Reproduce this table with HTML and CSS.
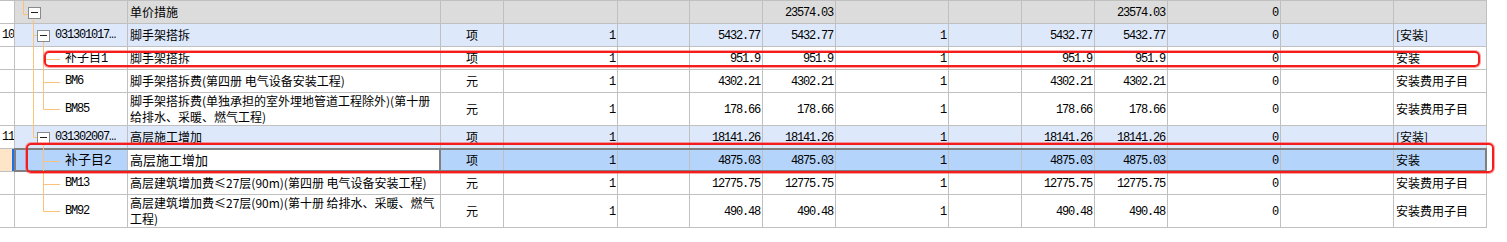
FILE: index.html
```html
<!DOCTYPE html>
<html lang="zh-CN">
<head>
<meta charset="utf-8">
<title>单价措施</title>
<link rel="stylesheet" href="styles.css">
</head>
<body>
<div class="sheet">
  <div class="row grp">
    <div class="cell rn"></div>
    <div class="cell code lv0"><span class="toggle"></span></div>
    <div class="cell name">单价措施</div>
    <div class="cell unit"></div>
    <div class="cell n"></div>
    <div class="cell n"></div>
    <div class="cell n"></div>
    <div class="cell n">23574.03</div>
    <div class="cell n"></div>
    <div class="cell n"></div>
    <div class="cell n"></div>
    <div class="cell n">23574.03</div>
    <div class="cell n">0</div>
    <div class="cell n"></div>
    <div class="cell tag"></div>
  </div>

  <div class="row item">
    <div class="cell rn">10</div>
    <div class="cell code lv1"><span class="toggle"></span><span class="ctext">031301017…</span></div>
    <div class="cell name">脚手架搭拆</div>
    <div class="cell unit">项</div>
    <div class="cell n">1</div>
    <div class="cell n"></div>
    <div class="cell n">5432.77</div>
    <div class="cell n">5432.77</div>
    <div class="cell n">1</div>
    <div class="cell n"></div>
    <div class="cell n">5432.77</div>
    <div class="cell n">5432.77</div>
    <div class="cell n">0</div>
    <div class="cell n"></div>
    <div class="cell tag">[安装]</div>
  </div>

  <div class="row sub">
    <div class="cell rn"></div>
    <div class="cell code leaf"><span class="ctext"><span class="cjk">补子目</span>1</span></div>
    <div class="cell name">脚手架搭拆</div>
    <div class="cell unit">项</div>
    <div class="cell n">1</div>
    <div class="cell n"></div>
    <div class="cell n">951.9</div>
    <div class="cell n">951.9</div>
    <div class="cell n">1</div>
    <div class="cell n"></div>
    <div class="cell n">951.9</div>
    <div class="cell n">951.9</div>
    <div class="cell n">0</div>
    <div class="cell n"></div>
    <div class="cell tag">安装</div>
  </div>

  <div class="row sub">
    <div class="cell rn"></div>
    <div class="cell code leaf"><span class="ctext">BM6</span></div>
    <div class="cell name">脚手架搭拆费(第四册 电气设备安装工程)</div>
    <div class="cell unit">元</div>
    <div class="cell n">1</div>
    <div class="cell n"></div>
    <div class="cell n">4302.21</div>
    <div class="cell n">4302.21</div>
    <div class="cell n">1</div>
    <div class="cell n"></div>
    <div class="cell n">4302.21</div>
    <div class="cell n">4302.21</div>
    <div class="cell n">0</div>
    <div class="cell n"></div>
    <div class="cell tag">安装费用子目</div>
  </div>

  <div class="row sub tall">
    <div class="cell rn"></div>
    <div class="cell code leaf"><span class="ctext">BM85</span></div>
    <div class="cell name wrap">脚手架搭拆费(单独承担的室外埋地管道工程除外)(第十册<br>给排水、采暖、燃气工程)</div>
    <div class="cell unit">元</div>
    <div class="cell n">1</div>
    <div class="cell n"></div>
    <div class="cell n">178.66</div>
    <div class="cell n">178.66</div>
    <div class="cell n">1</div>
    <div class="cell n"></div>
    <div class="cell n">178.66</div>
    <div class="cell n">178.66</div>
    <div class="cell n">0</div>
    <div class="cell n"></div>
    <div class="cell tag">安装费用子目</div>
  </div>

  <div class="row item">
    <div class="cell rn">11</div>
    <div class="cell code lv1"><span class="toggle"></span><span class="ctext">031302007…</span></div>
    <div class="cell name">高层施工增加</div>
    <div class="cell unit">项</div>
    <div class="cell n">1</div>
    <div class="cell n"></div>
    <div class="cell n">18141.26</div>
    <div class="cell n">18141.26</div>
    <div class="cell n">1</div>
    <div class="cell n"></div>
    <div class="cell n">18141.26</div>
    <div class="cell n">18141.26</div>
    <div class="cell n">0</div>
    <div class="cell n"></div>
    <div class="cell tag">[安装]</div>
  </div>

  <div class="row sub sel">
    <div class="cell rn"></div>
    <div class="cell code leaf"><span class="ctext"><span class="cjk big">补子目</span><span class="big">2</span></span></div>
    <div class="cell name edit big">高层施工增加</div>
    <div class="cell unit">项</div>
    <div class="cell n">1</div>
    <div class="cell n"></div>
    <div class="cell n">4875.03</div>
    <div class="cell n">4875.03</div>
    <div class="cell n">1</div>
    <div class="cell n"></div>
    <div class="cell n">4875.03</div>
    <div class="cell n">4875.03</div>
    <div class="cell n">0</div>
    <div class="cell n"></div>
    <div class="cell tag">安装</div>
  </div>

  <div class="row sub">
    <div class="cell rn"></div>
    <div class="cell code leaf"><span class="ctext">BM13</span></div>
    <div class="cell name">高层建筑增加费≤27层(90m)(第四册 电气设备安装工程)</div>
    <div class="cell unit">元</div>
    <div class="cell n">1</div>
    <div class="cell n"></div>
    <div class="cell n">12775.75</div>
    <div class="cell n">12775.75</div>
    <div class="cell n">1</div>
    <div class="cell n"></div>
    <div class="cell n">12775.75</div>
    <div class="cell n">12775.75</div>
    <div class="cell n">0</div>
    <div class="cell n"></div>
    <div class="cell tag">安装费用子目</div>
  </div>

  <div class="row sub tall">
    <div class="cell rn"></div>
    <div class="cell code leaf"><span class="ctext">BM92</span></div>
    <div class="cell name wrap">高层建筑增加费≤27层(90m)(第十册 给排水、采暖、燃气<br>工程)</div>
    <div class="cell unit">元</div>
    <div class="cell n">1</div>
    <div class="cell n"></div>
    <div class="cell n">490.48</div>
    <div class="cell n">490.48</div>
    <div class="cell n">1</div>
    <div class="cell n"></div>
    <div class="cell n">490.48</div>
    <div class="cell n">490.48</div>
    <div class="cell n">0</div>
    <div class="cell n"></div>
    <div class="cell tag">安装费用子目</div>
  </div>

  <svg class="tree-guides" width="127" height="230" viewBox="0 0 127 230">
    <g fill="none" stroke="#fdc27a" stroke-width="1">
      <path d="M23.5 0V13.5H28"/>
      <path d="M33.5 19V136.5H37M33.5 34.5H37"/>
      <path d="M43.5 41V108.5H60M44 58.5H60M44 81.5H60"/>
      <path d="M43.5 142V210.5H60M44 160.5H60M44 183.5H60"/>
    </g>
  </svg>
  <div class="mark mark-a"></div>
  <div class="mark mark-b"></div>
</div>
</body>
</html>
```

FILE: styles.css
```css
html, body {
  margin: 0;
  padding: 0;
  background: #ffffff;
}

body {
  font-family: "Noto Sans CJK SC", "Noto Sans", sans-serif;
  font-size: 12px;
  color: #000000;
}

.sheet {
  position: relative;
  width: 1487px;
  border-top: 1px solid #c0c0c0;
}

.row {
  display: grid;
  grid-template-columns: 14px 113px 313px 63px 114px 72px 73px 73px 113px 73px 73px 73px 113px 113px 94px;
  height: 23px;
}

.row.tall {
  height: 33px;
}

.cell {
  display: flex;
  align-items: center;
  box-sizing: border-box;
  min-width: 0;
  overflow: hidden;
  white-space: nowrap;
  line-height: 16px;
  border-left: 1px solid #c0c0c0;
  border-bottom: 1px solid #c0c0c0;
}

.cell:last-child {
  border-right: 1px solid #c0c0c0;
}

.cell.rn {
  border-left: none;
  justify-content: flex-end;
  padding-right: 0;
  background: #ffffff;
  font-family: "Liberation Mono", monospace;
  font-size: 12px;
  letter-spacing: -1.2px;
}

.cell.n {
  justify-content: flex-end;
  padding-right: 2px;
  padding-top: 1px;
  font-family: "Liberation Mono", monospace;
  font-size: 12px;
  letter-spacing: -1.2px;
}

.cell.unit {
  justify-content: center;
}

.cell.name {
  padding-left: 2px;
}

.cell.name.wrap {
  white-space: normal;
  align-items: center;
}

.cell.tag {
  padding-left: 2px;
}

.cell.code.lv0 {
  padding-left: 13px;
}

.cell.code.lv1 {
  padding-left: 22px;
}

.cell.code.leaf {
  padding-left: 50px;
}

.toggle {
  position: relative;
  flex: none;
  width: 13px;
  height: 12px;
  box-sizing: border-box;
  border: 1px solid #8a8a8a;
  background: #ffffff;
  margin-top: 1px;
}

.toggle::before {
  content: "";
  position: absolute;
  left: 2px;
  right: 2px;
  top: 4px;
  height: 1px;
  background: #222222;
}

.ctext {
  font-family: "Liberation Mono", monospace;
  font-size: 12px;
  letter-spacing: -1.2px;
}

.lv1 .ctext {
  margin-left: 5px;
}

.ctext .cjk {
  font-family: "Noto Sans CJK SC", sans-serif;
  font-size: 12px;
  letter-spacing: 0;
}

.big {
  font-size: 13px;
}

.ctext .cjk.big {
  font-size: 13px;
}

/* row states */
.row.grp .cell:not(.rn) {
  background: #dcdcdc;
}

.row.item .cell:not(.rn) {
  background: #dde8fb;
}

.row.sel {
  position: relative;
}

.row.sel .cell:not(.rn) {
  background: #b4d4fb;
}

.row.sel .cell.rn {
  background: #fee5c8;
  box-shadow: inset -2px 0 0 #1f6fe6;
}

.row.sel .cell.name.edit {
  background: #ffffff;
  box-shadow: inset -1px 0 0 #808080;
}

.row.sel .cell.name + .cell {
  border-left-color: #808080;
}

.row.sel::after {
  content: "";
  position: absolute;
  left: 14px;
  right: 0;
  top: -1px;
  bottom: 0;
  border: 2px solid #808080;
  pointer-events: none;
}

/* tree guide overlay */
.tree-guides {
  position: absolute;
  left: 0;
  top: 0;
  pointer-events: none;
}

/* annotation frames */
.mark {
  position: absolute;
  box-sizing: border-box;
  border: 2px solid #f31d1d;
  border-radius: 5px;
  box-shadow: 0 0 0 1px rgba(255, 70, 70, 0.5);
  pointer-events: none;
}

.mark-a {
  left: 44px;
  top: 50px;
  width: 1436px;
  height: 16px;
}

.mark-b {
  left: 26px;
  top: 142px;
  width: 1468px;
  height: 30px;
}
```
